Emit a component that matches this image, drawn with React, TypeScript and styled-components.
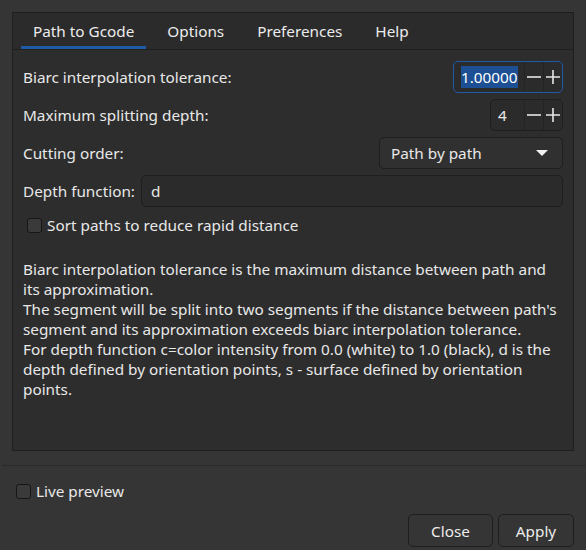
import React from 'react';
import styled, { createGlobalStyle } from 'styled-components';

const GlobalStyle = createGlobalStyle`
  html, body {
    margin: 0;
    padding: 0;
    background: #353535;
  }
  body {
    font-family: 'Noto Sans', 'Open Sans', sans-serif;
    font-size: 15.3px;
    color: #e8e8e8;
  }
`;

const Window = styled.div`
  width: 586px;
  height: 550px;
  box-sizing: border-box;
  display: flex;
  flex-direction: column;
  padding-top: 12px;
`;

const Panel = styled.div`
  margin: 0 12px 0 12px;
  height: 439px;
  box-sizing: border-box;
  border: 1px solid #1e1e1e;
  background: #2d2d2d;
  display: flex;
  flex-direction: column;
`;

const TabBar = styled.div`
  display: flex;
  height: 36px;
  padding-left: 8px;
  border-bottom: 1px solid #1f1f1f;
  background: #2b2b2b;
`;

const Tab = styled.div<{ $active?: boolean }>`
  padding: 2px 12px 0 12px;
  margin-right: 9px;
  display: flex;
  align-items: center;
  box-sizing: border-box;
  border-bottom: 3px solid ${p => (p.$active ? '#1f5aa6' : 'transparent')};
  color: #ececec;
`;

const Body = styled.div`
  padding: 11px 10px 0 10px;
  display: flex;
  flex-direction: column;
  gap: 6px;
`;

const Row = styled.div`
  display: flex;
  align-items: center;
  justify-content: space-between;
  height: 32px;
`;

const Label = styled.span`
  color: #e8e8e8;
  white-space: nowrap;
`;

const Spin = styled.div<{ $focused?: boolean; $width: number }>`
  width: ${p => p.$width}px;
  height: 32px;
  box-sizing: border-box;
  border: 1px solid ${p => (p.$focused ? '#1f5aa6' : '#1f1f1f')};
  border-radius: 5px;
  background: #2b2b2b;
  display: flex;
  align-items: stretch;
`;

const SpinValue = styled.div`
  flex: 1;
  display: flex;
  align-items: center;
  padding-left: 7px;
`;

const Selected = styled.span`
  background: #1c4f93;
  color: #fff;
  padding: 1px 0;
`;

const SpinButton = styled.div`
  width: 18px;
  border-left: 1px solid #242424;
  display: flex;
  align-items: center;
  justify-content: center;
`;

const Combo = styled.div`
  width: 184px;
  height: 32px;
  box-sizing: border-box;
  border: 1px solid #1e1e1e;
  border-radius: 5px;
  background: #303030;
  display: flex;
  align-items: center;
  justify-content: space-between;
  padding: 0 14px 0 11px;
`;

const Arrow = styled.span`
  width: 0;
  height: 0;
  border-left: 6px solid transparent;
  border-right: 6px solid transparent;
  border-top: 6px solid #f2f2f2;
`;

const TextInput = styled.div`
  flex: 1;
  margin-left: 6px;
  height: 32px;
  box-sizing: border-box;
  border: 1px solid #1f1f1f;
  border-radius: 5px;
  background: #2b2b2b;
  display: flex;
  align-items: center;
  padding-left: 9px;
`;

const CheckRow = styled.label<{ $indent: number }>`
  display: flex;
  align-items: center;
  gap: 5px;
  padding-left: ${p => p.$indent}px;
  height: 24px;
`;

const Box = styled.span`
  width: 15px;
  height: 15px;
  box-sizing: border-box;
  border: 1px solid #161616;
  border-radius: 3px;
  background: #3a3a3a;
`;

const Description = styled.p`
  margin: 16px 0 0 0;
  padding-right: 1px;
  line-height: 20px;
`;

const Separator = styled.div`
  height: 1px;
  background: #2a2a2a;
  margin: 14px 0 0 2px;
`;

const Footer = styled.div`
  display: flex;
  flex-direction: column;
  flex: 1;
  padding: 13px 12px 3px 16px;
`;

const Buttons = styled.div`
  margin-top: auto;
  display: flex;
  justify-content: flex-end;
  gap: 5px;
`;

const Button = styled.div<{ $width: number }>`
  width: ${p => p.$width}px;
  height: 33px;
  box-sizing: border-box;
  border: 1px solid #1e1e1e;
  border-radius: 5px;
  background: #353535;
  display: flex;
  align-items: center;
  justify-content: center;
  color: #ececec;
`;

const Minus = () => (
  <svg width="16" height="16" viewBox="0 0 16 16">
    <path d="M1 8h14" stroke="#e6e6e6" strokeWidth="1.6" />
  </svg>
);

const Plus = () => (
  <svg width="16" height="16" viewBox="0 0 16 16">
    <path d="M1 8h14M8 1v14" stroke="#e6e6e6" strokeWidth="1.6" />
  </svg>
);

const SpinBox: React.FC<{ value: React.ReactNode; width: number; focused?: boolean }> = ({
  value,
  width,
  focused
}) => (
  <Spin $width={width} $focused={focused}>
    <SpinValue>{value}</SpinValue>
    <SpinButton>
      <Minus />
    </SpinButton>
    <SpinButton>
      <Plus />
    </SpinButton>
  </Spin>
);

const tabs = ['Path to Gcode', 'Options', 'Preferences', 'Help'];

export default function App() {
  return (
    <>
      <GlobalStyle />
      <Window>
        <Panel>
          <TabBar>
            {tabs.map((t, i) => (
              <Tab key={t} $active={i === 0}>
                {t}
              </Tab>
            ))}
          </TabBar>
          <Body>
            <Row>
              <Label>Biarc interpolation tolerance:</Label>
              <SpinBox width={110} focused value={<Selected>1.00000</Selected>} />
            </Row>
            <Row>
              <Label>Maximum splitting depth:</Label>
              <SpinBox width={73} value="4" />
            </Row>
            <Row>
              <Label>Cutting order:</Label>
              <Combo>
                <span>Path by path</span>
                <Arrow />
              </Combo>
            </Row>
            <Row>
              <Label>Depth function:</Label>
              <TextInput>d</TextInput>
            </Row>
            <CheckRow $indent={4}>
              <Box />
              <span>Sort paths to reduce rapid distance</span>
            </CheckRow>
            <Description>
              Biarc interpolation tolerance is the maximum distance between path and its approximation.
              <br />
              The segment will be split into two segments if the distance between path's segment and its
              approximation exceeds biarc interpolation tolerance.
              <br />
              For depth function c=color intensity from 0.0 (white) to 1.0 (black), d is the depth defined
              by orientation points, s - surface defined by orientation points.
            </Description>
          </Body>
        </Panel>
        <Separator />
        <Footer>
          <CheckRow $indent={0}>
            <Box />
            <span>Live preview</span>
          </CheckRow>
          <Buttons>
            <Button $width={85}>Close</Button>
            <Button $width={76}>Apply</Button>
          </Buttons>
        </Footer>
      </Window>
    </>
  );
}
